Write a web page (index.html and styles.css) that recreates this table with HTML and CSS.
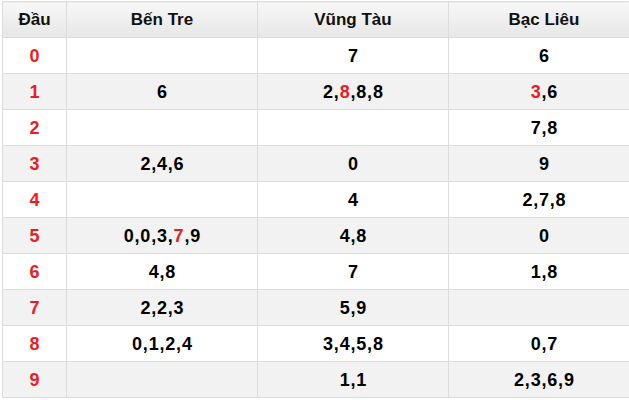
FILE: index.html
```html
<!DOCTYPE html>
<html lang="vi">
<head>
<meta charset="utf-8">
<title>Đầu</title>
<link rel="stylesheet" href="styles.css">
</head>
<body>
<table class="loto">
  <colgroup>
    <col class="c-head">
    <col class="c-prov">
    <col class="c-prov">
    <col class="c-prov">
  </colgroup>
  <thead>
    <tr><th>Đầu</th><th>Bến Tre</th><th>Vũng Tàu</th><th>Bạc Liêu</th></tr>
  </thead>
  <tbody>
    <tr><td class="dau">0</td><td></td><td>7</td><td>6</td></tr>
    <tr><td class="dau">1</td><td>6</td><td>2,<span class="hl">8</span>,8,8</td><td><span class="hl">3</span>,6</td></tr>
    <tr><td class="dau">2</td><td></td><td></td><td>7,8</td></tr>
    <tr><td class="dau">3</td><td>2,4,6</td><td>0</td><td>9</td></tr>
    <tr><td class="dau">4</td><td></td><td>4</td><td>2,7,8</td></tr>
    <tr><td class="dau">5</td><td>0,0,3,<span class="hl">7</span>,9</td><td>4,8</td><td>0</td></tr>
    <tr><td class="dau">6</td><td>4,8</td><td>7</td><td>1,8</td></tr>
    <tr><td class="dau">7</td><td>2,2,3</td><td>5,9</td><td></td></tr>
    <tr><td class="dau">8</td><td>0,1,2,4</td><td>3,4,5,8</td><td>0,7</td></tr>
    <tr><td class="dau">9</td><td></td><td>1,1</td><td>2,3,6,9</td></tr>
  </tbody>
</table>
</body>
</html>
```

FILE: styles.css
```css
html, body {
  margin: 0;
  padding: 0;
  background: #ffffff;
  overflow: hidden;
}

.loto {
  border-collapse: collapse;
  table-layout: fixed;
  width: 637px;
  margin: 1px 0 0 2px;
  font-family: "Liberation Sans", Arial, sans-serif;
  font-weight: bold;
  color: #000000;
}

.c-head { width: 64px; }
.c-prov { width: 191px; }

.loto th,
.loto td {
  border: 1px solid #dedbd8;
  text-align: center;
  vertical-align: middle;
  padding: 0;
  height: 35px;
  line-height: 20px;
}

.loto th {
  background: linear-gradient(#f7f7f7, #e7e7e7);
  font-size: 17px;
  color: #111111;
}

.loto td {
  font-size: 18px;
  letter-spacing: 0.8px;
  text-indent: 0.8px;
}

.loto tbody tr:nth-child(odd) td { background: #ffffff; }
.loto tbody tr:nth-child(even) td { background: #f2f2f2; }

.dau,
.hl {
  color: #ed1c24;
}
```
